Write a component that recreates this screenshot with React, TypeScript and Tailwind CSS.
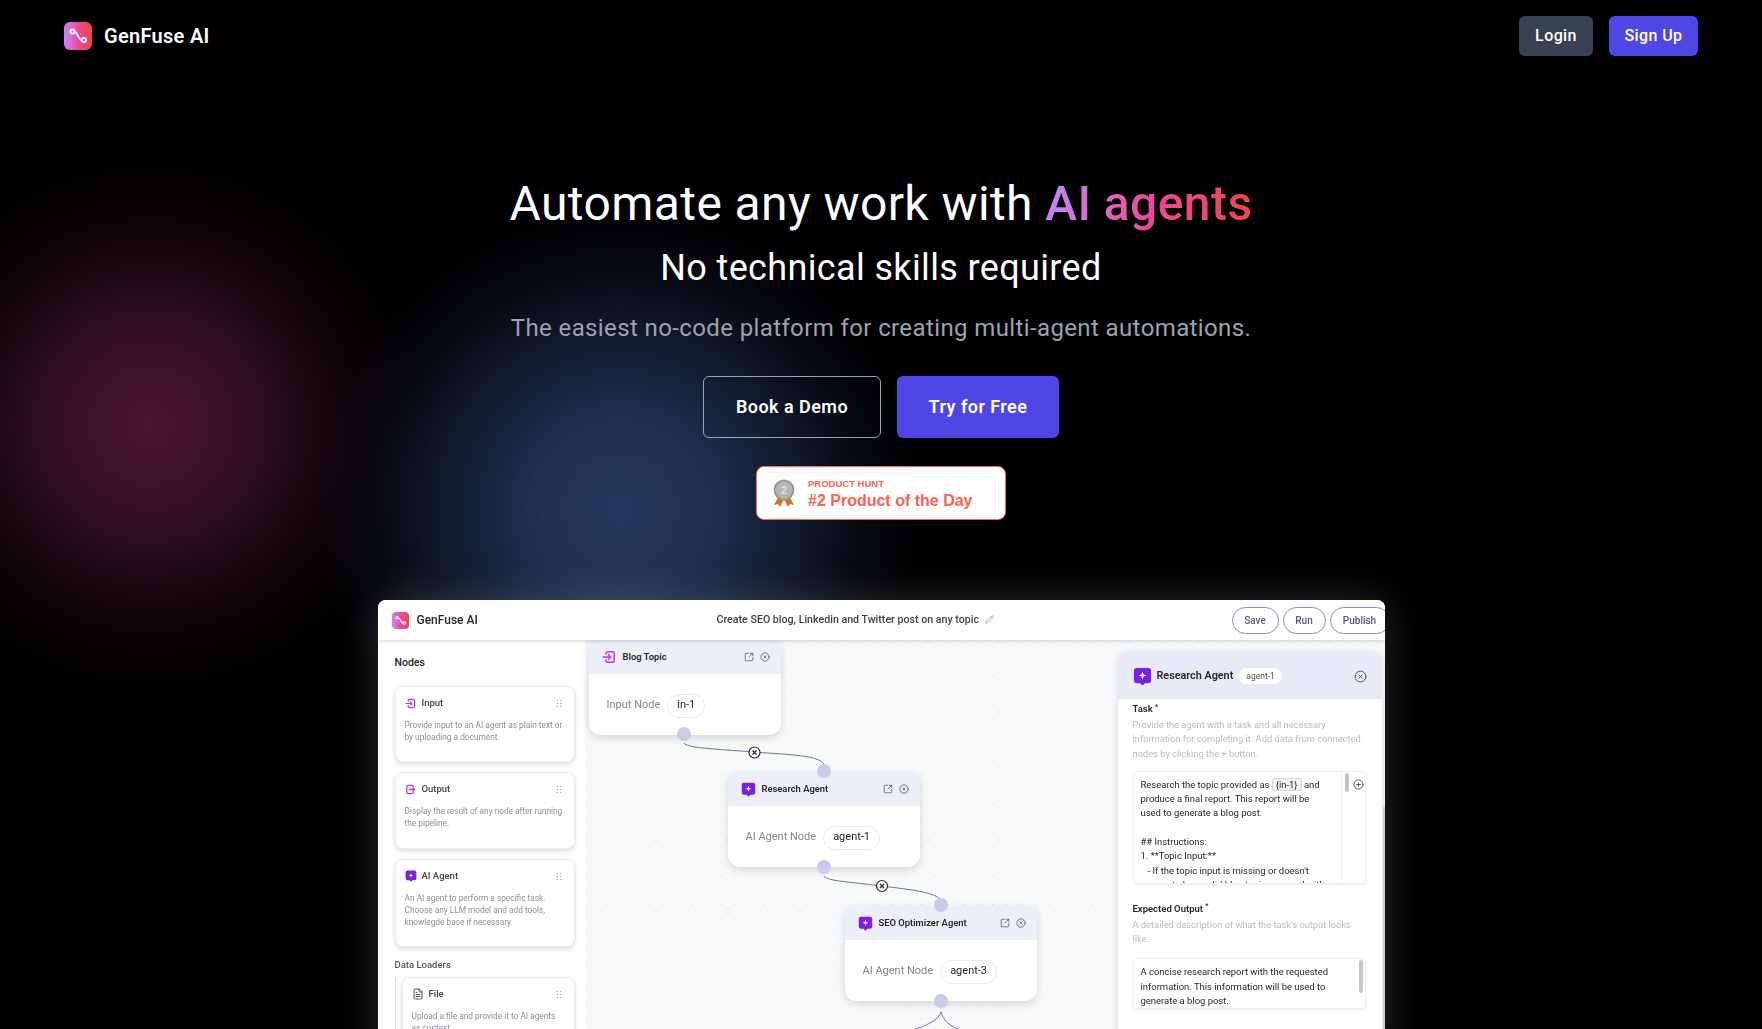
import { CirclePlus, CircleX, FileText, Pencil, SquareArrowOutUpRight } from "lucide-react";

function LogoMark({ className }: { className: string }) {
  return (
    <div className={`flex items-center justify-center bg-gradient-to-r from-[#c084fc] via-[#ec4899] to-[#ef4444] ${className}`}>
      <svg viewBox="0 0 28 28" className="h-full w-full" fill="none" stroke="white" strokeWidth="1.8">
        <circle cx="8.500" cy="9.500" r="2.100" />
        <circle cx="20" cy="18" r="2.100" />
        <path d="M10.600 9.800c3.500.2 3 7.800 7.300 8.200" />
      </svg>
    </div>
  );
}

function InputIcon({ className }: { className: string }) {
  return (
    <svg viewBox="0 0 24 24" className={className} fill="none" stroke="#bb36e8" strokeWidth="2.600" strokeLinecap="round" strokeLinejoin="round">
      <path d="M7 7V6a3 3 0 0 1 3-3h8a3 3 0 0 1 3 3v12a3 3 0 0 1-3 3h-8a3 3 0 0 1-3-3v-1" />
      <path d="M2 12h12" />
      <path d="M11 8l4 4-4 4" />
    </svg>
  );
}

function OutputIcon({ className }: { className: string }) {
  return (
    <svg viewBox="0 0 24 24" className={className} fill="none" stroke="#bb36e8" strokeWidth="2.800" strokeLinecap="round" strokeLinejoin="round">
      <path d="M18 7V6a3 3 0 0 0-3-3H7a3 3 0 0 0-3 3v12a3 3 0 0 0 3 3h8a3 3 0 0 0 3-3v-1" />
      <path d="M10 12h11" />
      <path d="M18 9l3 3-3 3" />
    </svg>
  );
}

function AgentIcon({ className }: { className: string }) {
  return (
    <svg viewBox="0 0 20 20" className={className}>
      <path d="M4 1h12a3 3 0 0 1 3 3v10a3 3 0 0 1-3 3h-3.500L10 19.500 7.500 17H4a3 3 0 0 1-3-3V4a3 3 0 0 1 3-3z" fill="#7c1fe6" />
      <path d="M10 5l1.100 2.900L14 9l-2.900 1.100L10 13l-1.100-2.900L6 9l2.900-1.100z" fill="white" />
    </svg>
  );
}

function Grip() {
  return (
    <svg viewBox="0 0 8 10" className="h-[9px] w-[7px]" fill="#a1a1aa">
      <circle cx="1.500" cy="1.500" r="0.800" />
      <circle cx="5.500" cy="1.500" r="0.800" />
      <circle cx="1.500" cy="5" r="0.800" />
      <circle cx="5.500" cy="5" r="0.800" />
      <circle cx="1.500" cy="8.500" r="0.800" />
      <circle cx="5.500" cy="8.500" r="0.800" />
    </svg>
  );
}

function Medal() {
  return (
    <svg viewBox="0 0 22 28" className="h-[28px] w-[22px]">
      <path d="M6 17L1 26l4-1 2 3 4-8z" fill="#d9701c" />
      <path d="M16 17l5 9-4-1-2 3-4-8z" fill="#d9701c" />
      <circle cx="11" cy="11" r="10.500" fill="#9a9a9a" />
      <circle cx="11" cy="11" r="8.500" fill="#b5b5b5" />
      <text x="11" y="15" textAnchor="middle" fontSize="11" fontWeight="700" fill="#e4e4e4" fontFamily="Liberation Sans, sans-serif">2</text>
    </svg>
  );
}

function SideCard({ icon, title, lines, className }: { icon: React.ReactNode; title: string; lines: string[]; className: string }) {
  return (
    <div className={`rounded-lg border border-[#eceef2] bg-white pl-[9px] pr-[11px] pt-[9px] shadow-[0_2px_5px_rgba(0,0,0,0.14)] ${className}`}>
      <div className="flex h-[14px] items-center">
        <div className="flex w-[17px] items-center">{icon}</div>
        <span className="text-[9.500px] font-medium text-[#3f3f46]">{title}</span>
        <div className="ml-auto">
          <Grip />
        </div>
      </div>
      <div className="mt-[9px] text-[8.300px] leading-[12px] text-[#8b8f98]">
        {lines.map((l) => (
          <div key={l} className="whitespace-nowrap">{l}</div>
        ))}
      </div>
    </div>
  );
}

function FlowNode({ icon, title, label, tag, className }: { icon: React.ReactNode; title: string; label: string; tag: string; className: string }) {
  return (
    <div className={`absolute h-[95px] w-[192px] rounded-b-xl rounded-t-lg bg-white shadow-[0_3px_8px_rgba(0,0,0,0.14)] ${className}`}>
      <div className="flex h-[34px] items-center rounded-t-lg bg-[#eceef8] pl-[13px] pr-[11px]">
        <div className="flex w-[21px] items-center">{icon}</div>
        <span className="text-[9.400px] font-semibold text-[#27272a]">{title}</span>
        <SquareArrowOutUpRight className="ml-auto h-[10px] w-[10px] text-[#52525b]" strokeWidth={1.800} />
        <CircleX className="ml-[6px] h-[10px] w-[10px] text-[#52525b]" strokeWidth={1.800} />
      </div>
      <div className="flex h-[61px] items-center pl-[18px] pt-[2px]">
        <span className="text-[11px] text-[#85858f]">{label}</span>
        <span className="ml-[7px] flex h-[24px] items-center rounded-full border border-[#e9e9ee] px-[9px] text-[11px] text-[#27272a]">{tag}</span>
      </div>
    </div>
  );
}

function Handle({ className }: { className: string }) {
  return <div className={`absolute h-[14px] w-[14px] rounded-full bg-[#c9cbe8] ${className}`} />;
}

export default function App() {
  return (
    <div className="relative h-[1029px] overflow-hidden bg-black font-['Roboto',sans-serif] text-white">
      {/* background glows */}
      <div className="absolute left-[-150px] top-[125px] h-[600px] w-[600px] bg-[radial-gradient(circle,rgba(74,22,48,1)_0%,rgba(74,22,48,0.82)_15%,rgba(66,20,42,0.46)_35%,rgba(50,14,30,0.18)_50%,rgba(0,0,0,0)_65%)]" />
      <div className="absolute left-[270px] top-[160px] h-[700px] w-[700px] bg-[radial-gradient(circle,rgba(35,55,92,1)_0%,rgba(35,55,92,0.94)_15%,rgba(30,48,82,0.55)_35%,rgba(24,38,66,0.2)_50%,rgba(0,0,0,0)_62%)]" />

      <nav className="relative flex h-[72px] items-center px-16">
        <LogoMark className="h-7 w-7 rounded-md" />
        <span className="ml-3 text-xl font-semibold tracking-[0.015em]">GenFuse AI</span>
        <button className="ml-auto h-10 w-[74px] rounded-md bg-[#374151] text-base font-medium tracking-wide">Login</button>
        <button className="ml-4 h-10 w-[89px] rounded-md bg-[#4f46e5] text-base font-medium tracking-wide">Sign Up</button>
      </nav>

      <main className="relative flex flex-col items-center">
        <h1 className="mt-[102px] text-5xl font-normal leading-[60px] tracking-[0.0085em]">
          Automate any work with{" "}
          <span className="bg-gradient-to-r from-[#c084fc] via-[#ec4899] to-[#ef4444] bg-clip-text font-medium text-transparent">AI agents</span>
        </h1>
        <h2 className="mt-[14px] text-4xl font-normal leading-[40px] tracking-[0.01em]">No technical skills required</h2>
        <p className="mt-[24px] text-2xl font-normal leading-8 tracking-[0.016em] text-[#9ca3af]">The easiest no-code platform for creating multi-agent automations.</p>

        <div className="mt-[32px] flex gap-4">
          <button className="h-[62px] w-[178px] rounded-md border border-[#9ca3af] text-lg font-semibold tracking-wide">Book a Demo</button>
          <button className="h-[62px] w-[162px] rounded-md bg-[#4f46e5] text-lg font-semibold tracking-wide">Try for Free</button>
        </div>

        <div className="mt-7 flex h-[54px] w-[250px] items-center rounded-lg border border-[#ff6154] bg-white pl-4 font-['Liberation_Sans',sans-serif] text-[#ff6154]">
          <Medal />
          <div className="ml-[13px] mt-[2px]">
            <div className="text-[9.500px] font-bold leading-[11px]">PRODUCT HUNT</div>
            <div className="mt-[2px] whitespace-nowrap text-base font-bold leading-[20px]">#2 Product of the Day</div>
          </div>
        </div>

        {/* product screenshot */}
        <div className="mt-[80px] h-[460px] w-[1007px] shrink-0 overflow-hidden rounded-t-lg bg-white text-[#27272a] shadow-[0_0_40px_rgba(255,255,255,0.16)] blur-[0.4px]">
          <header className="relative z-10 flex h-10 items-center bg-white pl-[14px] shadow-[0_1px_4px_rgba(0,0,0,0.18)]">
            <LogoMark className="h-[17px] w-[17px] rounded-[4px]" />
            <span className="ml-[8px] w-[234px] text-xs font-medium">GenFuse AI</span>
            <span className="ml-[66px] flex items-center whitespace-nowrap text-[10.650px] font-medium text-[#3f3f46]">
              Create SEO blog, Linkedin and Twitter post on any topic
              <Pencil className="ml-[6px] h-[9px] w-[9px] text-[#a1a1aa]" />
            </span>
            <div className="absolute left-[854px] flex h-[27px] gap-[4px] text-[10px] font-medium text-[#555591]">
              <span className="flex w-[47px] items-center justify-center rounded-full border border-[#8b8bb5]">Save</span>
              <span className="flex w-[43px] items-center justify-center rounded-full border border-[#8b8bb5]">Run</span>
              <span className="flex w-[60px] items-center justify-center rounded-full border border-[#8b8bb5]">Publish</span>
            </div>
          </header>

          <div className="flex h-[420px]">
            <aside className="w-[207px] shrink-0 bg-white pl-[17px] pr-[10px]">
              <div className="pt-[16px] text-[10.500px] font-medium leading-[14px]">Nodes</div>
              <div className="mt-[16px] flex flex-col gap-[10px]">
                <SideCard className="h-[76px]" icon={<InputIcon className="h-[11px] w-[11px]" />} title="Input" lines={["Provide input to an AI agent as plain text or", "by uploading a document."]} />
                <SideCard className="h-[77px]" icon={<OutputIcon className="h-[11px] w-[11px]" />} title="Output" lines={["Display the result of any node after running", "the pipeline."]} />
                <SideCard className="h-[88px]" icon={<AgentIcon className="h-[12px] w-[12px]" />} title="AI Agent" lines={["An AI agent to perform a specific task.", "Choose any LLM model and add tools,", "knowlegde base if necessary."]} />
              </div>
              <div className="mt-[11px] text-[9.500px] font-medium leading-[14px] text-[#52525b]">Data Loaders</div>
              <div className="mt-[5px] border-l border-[#d4d4d8] pl-[6px]">
                <SideCard className="h-[90px]" icon={<FileText className="h-[12px] w-[12px] text-[#52525b]" />} title="File" lines={["Upload a file and provide it to AI agents", "as context."]} />
              </div>
            </aside>

            <div className="relative flex-1 bg-[#f8f9fb] bg-[radial-gradient(#d4d6dc_0.7px,transparent_0.7px)] bg-[size:14.300px_14.300px]">
              {/* connections */}
              <svg viewBox="0 0 800 420" className="absolute inset-0 h-[420px] w-[800px]" fill="none" stroke="#6f70a8" strokeWidth="1">
                <path d="M99 103c2 5 32 6 70 9s63 3 70 12" />
                <path d="M239 236c2 5 27 6 58 10s52 6 59 14" />
                <path d="M356 372c-2 8-15 14-29 18" />
                <path d="M356 372c2 8 8 14 20 18" />
                <g fill="white" stroke="#27272a" strokeWidth="1.200">
                  <circle cx="169.500" cy="112.500" r="5.500" />
                  <path d="M167.500 110.500l4 4m0-4l-4 4" />
                  <circle cx="297" cy="246" r="5.500" />
                  <path d="M295 244l4 4m0-4l-4 4" />
                </g>
              </svg>

              <FlowNode className="left-[4px] top-0" icon={<InputIcon className="h-[14px] w-[14px]" />} title="Blog Topic" label="Input Node" tag="in-1" />
              <FlowNode className="left-[143px] top-[132px]" icon={<AgentIcon className="h-[15px] w-[15px]" />} title="Research Agent" label="AI Agent Node" tag="agent-1" />
              <FlowNode className="left-[260px] top-[266px]" icon={<AgentIcon className="h-[15px] w-[15px]" />} title="SEO Optimizer Agent" label="AI Agent Node" tag="agent-3" />
              <Handle className="left-[92px] top-[87px]" />
              <Handle className="left-[232px] top-[124px]" />
              <Handle className="left-[232px] top-[220px]" />
              <Handle className="left-[349px] top-[258px]" />
              <Handle className="left-[349px] top-[354px]" />

              {/* agent settings panel */}
              <div className="absolute left-[533px] top-[13px] h-[420px] w-[264px] rounded-t-lg bg-white shadow-[0_0_6px_rgba(0,0,0,0.12)]">
                <div className="flex h-[46px] items-center rounded-t-lg bg-[#e8eaf6] pl-[15px] pr-[15px]">
                  <AgentIcon className="h-[19px] w-[19px]" />
                  <span className="ml-[5px] text-[10.800px] font-semibold">Research Agent</span>
                  <span className="ml-[6px] flex h-[16px] items-center rounded-full bg-white px-[7px] text-[8.500px] text-[#52525b]">agent-1</span>
                  <CircleX className="ml-auto h-[13px] w-[13px] text-[#3f3f46]" strokeWidth={1.600} />
                </div>
                <div className="pl-[15px] pr-[16px]">
                  <div className="mt-[3px] text-[9.500px] font-semibold leading-[14px]">
                    Task <sup className="text-[7px]">*</sup>
                  </div>
                  <p className="mt-[2px] text-[9.300px] leading-[14.300px] text-[#b9bbc2]">
                    Provide the agent with a task and all necessary
                    <br />
                    information for completing it. Add data from connected
                    <br />
                    nodes by clicking the + button.
                  </p>
                  <div className="mt-[10px] flex h-[113px] w-[233px] overflow-hidden rounded border border-[#eef0f3] shadow-[0_1px_2px_rgba(0,0,0,0.08)]">
                    <div className="h-full w-[208px] overflow-hidden border-r border-[#eef0f3] pl-[7px] pt-[6px] text-[9.450px] leading-[14.300px] text-[#27272a]">
                      <div className="whitespace-nowrap">
                        Research the topic provided as <span className="rounded-[2px] border border-[#d4d6dc] bg-[#f1f2f5] px-[3px]">{"{in-1}"}</span> and
                      </div>
                      <div className="whitespace-nowrap">produce a final report. This report will be</div>
                      <div className="whitespace-nowrap">used to generate a blog post.</div>
                      <div className="h-[14.300px]" />
                      <div className="whitespace-nowrap">## Instructions:</div>
                      <div className="whitespace-nowrap">1. **Topic Input:**</div>
                      <div className="whitespace-pre">{"   - If the topic input is missing or doesn't"}</div>
                      <div className="whitespace-nowrap">appear to be a valid blog topic, respond with:</div>
                    </div>
                    <div className="relative flex-1">
                      <div className="ml-[3px] mt-[1px] h-[19px] w-[4px] rounded-full bg-[#c4c6cc]" />
                      <CirclePlus className="absolute left-[11px] top-[7px] h-[11px] w-[11px] text-[#27272a]" strokeWidth={1.600} />
                    </div>
                  </div>
                  <div className="mt-[18px] text-[9.500px] font-semibold leading-[14px]">
                    Expected Output <sup className="text-[7px]">*</sup>
                  </div>
                  <p className="mt-[2px] text-[9.300px] leading-[14.300px] text-[#b9bbc2]">
                    A detailed description of what the task's output looks
                    <br />
                    like.
                  </p>
                  <div className="mt-[12px] flex h-[51px] w-[233px] overflow-hidden rounded border border-[#eef0f3] shadow-[0_1px_2px_rgba(0,0,0,0.08)]">
                    <div className="flex-1 overflow-hidden pl-[7px] pt-[6px] text-[9.450px] leading-[14.300px] text-[#27272a]">
                      <div className="whitespace-nowrap">A concise research report with the requested</div>
                      <div className="whitespace-nowrap">information. This information will be used to</div>
                      <div className="whitespace-nowrap">generate a blog post.</div>
                    </div>
                    <div className="mr-[2px] mt-[1px] h-[33px] w-[4px] rounded-full bg-[#c4c6cc]" />
                  </div>
                </div>
              </div>
              <div className="absolute left-[798px] top-[167px] h-[253px] w-[2px] bg-[#c9cbd0]" />
            </div>
          </div>
        </div>
      </main>
    </div>
  );
}
